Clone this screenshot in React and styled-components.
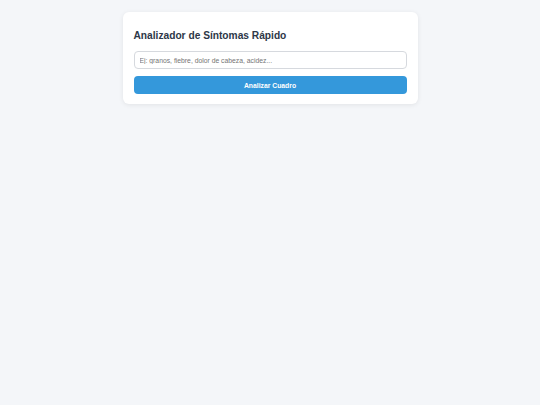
import React, { useState } from 'react';
import styled, { createGlobalStyle } from 'styled-components';

const GlobalStyle = createGlobalStyle`
    html, body {
        margin: 0;
        padding: 0;
        background: #f4f6f9;
        font-family: "Liberation Sans", Arial, sans-serif;
    }
`

const Page = styled.div`
    min-height: 405px;
    display: flex;
    justify-content: center;
    align-items: flex-start;
    padding-top: 12px;
    box-sizing: border-box;
`

const Card = styled.div`
    width: 295px;
    box-sizing: border-box;
    background: #ffffff;
    border-radius: 6px;
    padding: 18px 11px 10px;
    box-shadow: 0 1px 5px rgba(0, 0, 0, 0.08);
`

const Title = styled.h2`
    margin: 0 0 9px;
    font-size: 10.2px;
    font-weight: bold;
    color: #2d3748;
    line-height: 12px;
`

const Input = styled.input`
    display: block;
    width: 100%;
    height: 18px;
    box-sizing: border-box;
    border: 1px solid #d6d9de;
    border-radius: 4px;
    padding: 0 5px;
    font-family: inherit;
    font-size: 6.8px;
    color: #333;
    outline: none;
    &::placeholder {
        color: #757575;
    }
`

const Button = styled.button`
    display: block;
    width: 100%;
    height: 18px;
    margin-top: 7px;
    border: none;
    border-radius: 4px;
    background: #3498db;
    color: #ffffff;
    font-family: inherit;
    font-size: 6.8px;
    font-weight: bold;
    cursor: pointer;
`

const App = () => {
    let [query, setQuery] = useState('')
    return (
        <Page>
            <GlobalStyle />
            <Card>
                <Title>Analizador de Síntomas Rápido</Title>
                <Input
                    value={query}
                    onChange={e => setQuery(e.target.value)}
                    placeholder="Ej: granos, fiebre, dolor de cabeza, acidez..."
                />
                <Button>Analizar Cuadro</Button>
            </Card>
        </Page>
    )
}
export default App;
